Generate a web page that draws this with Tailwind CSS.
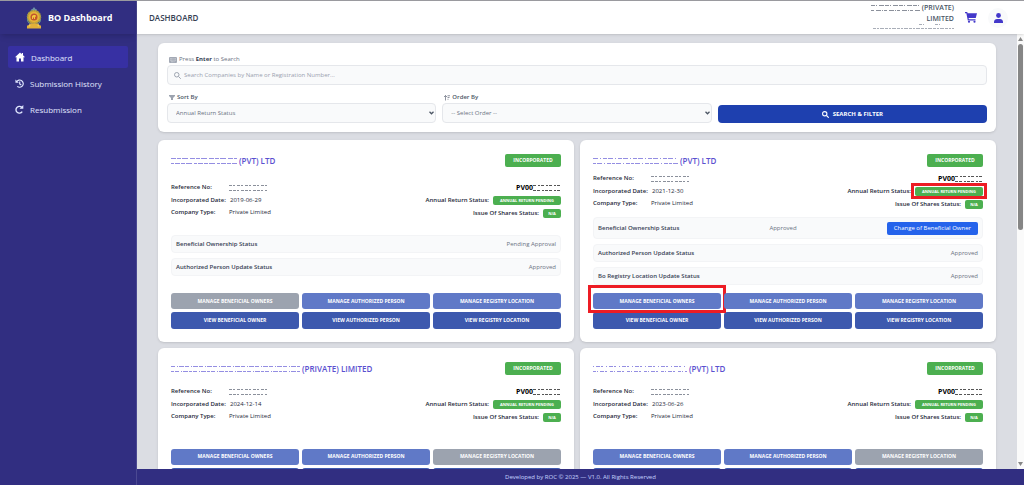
<!DOCTYPE html>
<html lang="en">
  <head>
    <meta charset="UTF-8" />
    <meta name="viewport" content="width=device-width, initial-scale=1.0" />
    <title>BO Dashboard</title>
    <script src="https://cdn.jsdelivr.net/npm/@tailwindcss/browser@4"></script>
    <style>
      body {
        font-family: "Open Sans", "Noto Sans", sans-serif;
      }
    </style>
  </head>
  <body class="h-screen flex overflow-hidden bg-[#dbdde3] text-[6px] leading-[9px] text-gray-800 border-t border-[#9a9a9f]">
    <!-- sidebar -->
    <aside class="w-[137px] shrink-0 bg-[#312e81] text-indigo-100 border-r border-[#4b4992]">
      <div class="h-[33px] flex items-center gap-[6px] pl-[26px] shadow-md">
        <svg class="w-4 h-[22px]" viewBox="0 0 32 44">
          <path d="M16 0l3 4 3 1-2 4h-8l-2-4 3-1z" fill="#6d93a8" />
          <circle cx="16" cy="20" r="14" fill="#d9a62e" />
          <circle cx="16" cy="20" r="13" fill="none" stroke="#8a9a5a" stroke-width="3" stroke-dasharray="2 2" />
          <circle cx="16" cy="20" r="10" fill="#e5b53b" />
          <circle cx="16" cy="20" r="7" fill="#c2552c" />
          <path d="M12 24v-6l3-2h4l1 3-2 1v4h-2v-3h-2v3z" fill="#f4c63d" />
          <path d="M3 25c0 7 6 11 13 11s13-4 13-11" fill="none" stroke="#6f9f8d" stroke-width="2" />
          <path d="M8 33h16l3 4h3v6H2v-6h3z" fill="#e2b03a" />
          <circle cx="7" cy="37" r="2" fill="#f0cf55" />
          <circle cx="25" cy="37" r="2" fill="#f0cf55" />
        </svg>
        <span class="text-[9px] leading-[14px] font-bold text-white">BO Dashboard</span>
      </div>
      <nav class="px-2 pt-3 flex flex-col gap-1 text-[8px]">
        <a href="#" class="h-[22px] rounded-[2px] bg-[#3730a3] flex items-center gap-[6px] px-[7px]">
          <svg class="w-[10px] h-[10px]" viewBox="0 0 20 20" fill="#fff"><path d="M10 1L0 10.500h3V19h5v-6h4v6h5v-8.500h3L16 6.700V2h-2.500v2.400z" /></svg>
          Dashboard
        </a>
        <a href="#" class="h-[22px] flex items-center gap-[6px] px-[7px]">
          <svg class="w-[9px] h-[9px]" viewBox="0 0 20 20" fill="none" stroke="currentColor" stroke-width="2.600"><path d="M3.500 6A8 8 0 1 1 5 16.300" /><path d="M1 1v7.500h7.500z" fill="currentColor" stroke="none" /><path d="M10.500 5.500V11l3.500 2.500" /></svg>
          Submission History
        </a>
        <a href="#" class="h-[22px] flex items-center gap-[6px] px-[7px]">
          <svg class="w-[9px] h-[9px]" viewBox="0 0 20 20" fill="none" stroke="currentColor" stroke-width="3"><path d="M16 6.500A7.500 7.500 0 1 0 16 14.500" /><path d="M18.500 0v8.500H10z" fill="currentColor" stroke="none" /></svg>
          Resubmission
        </a>
      </nav>
    </aside>

    <div class="flex-1 min-w-0 flex flex-col">
      <!-- top bar -->
      <header class="h-[33px] shrink-0 bg-white flex items-center pl-3 pr-4 shadow-sm z-10">
        <h1 class="text-[8px] font-semibold text-gray-700">DASHBOARD</h1>
        <div class="ml-auto text-right text-[7px] leading-[11px] font-semibold text-gray-600 pb-1">
          <div class="flex items-center justify-end gap-[2px]">
            <svg class="w-[49px] h-[6px]" stroke="#8b909b"><path d="M0 .5H49" stroke-dasharray="4 1 1 2 5 1" /><path d="M0 5.500H49" stroke-dasharray="3 2 5 1 1 1" /></svg>
            (PRIVATE)
          </div>
          <div>LIMITED</div>
          <svg class="w-[81px] h-[5px] ml-auto" stroke="#a9aeb8"><path d="M46 .5H76" stroke-dasharray="3 1 1 11" /><path d="M0 4.500H81" stroke-dasharray="3 1 2 1 4 1" /></svg>
        </div>
        <button aria-label="Cart" class="ml-[11px]">
          <svg class="w-3 h-[11px]" viewBox="0 0 24 22" fill="#4338ca"><path d="M0 0h4.500l.6 2.500H24L21.500 12H7.200l.5 2.500H21V17H5.600L2.700 2.500H0z" /><circle cx="8" cy="19.500" r="2.200" /><circle cx="19" cy="19.500" r="2.200" /></svg>
        </button>
        <button aria-label="Profile" class="ml-[11px] w-5 h-5 rounded-full bg-gray-50 flex items-center justify-center">
          <svg class="w-[9px] h-[10px]" viewBox="0 0 18 20" fill="#4338ca"><circle cx="9" cy="5" r="4.800" /><path d="M0 20v-2c0-4 3-6 6-6h6c3 0 6 2 6 6v2z" /></svg>
        </button>
      </header>

      <div class="flex-1 min-h-0 flex">
        <main class="flex-1 min-w-0 overflow-hidden px-[21px] pt-[9px]">
          <!-- search and filter -->
          <form class="bg-white rounded-[6px] shadow px-[9px] pt-3 pb-[9px]">
            <label for="search" class="flex items-center gap-[2px] pl-[2px] text-gray-500">
              <svg class="w-2 h-[6px]" viewBox="0 0 16 12"><rect width="16" height="12" rx="2" fill="#a3a9b5" /><path d="M2 3.500h12M2 6.500h12M4 9.500h8" stroke="#fff" stroke-dasharray="1.500 1" /></svg>
              <span>Press <b class="text-gray-700">Enter</b> to Search</span>
            </label>
            <div class="mt-[1px] h-5 rounded-[4px] border border-gray-200 bg-gray-50 flex items-center gap-[3px] px-[6px]">
              <svg class="w-[7px] h-[7px]" viewBox="0 0 14 14" fill="none" stroke="#9ca3af" stroke-width="2"><circle cx="5.500" cy="5.500" r="4.500" /><path d="M9 9l4.500 4.500" /></svg>
              <input id="search" type="text" placeholder="Search Companies by Name or Registration Number..." class="flex-1 outline-none placeholder:text-gray-400" />
            </div>
            <div class="mt-2 grid grid-cols-3 gap-[6px] items-end">
              <div>
                <label for="sort" class="flex items-center gap-[2px] pl-[2px] font-semibold text-gray-600">
                  <svg class="w-[6px] h-[5px]" viewBox="0 0 12 10" fill="#9ca3af"><path d="M0 0h12v2L8 6v4H4V6L0 2z" /></svg>
                  Sort By
                </label>
                <div class="relative mt-[1px]">
                  <select id="sort" class="appearance-none w-full h-5 rounded-[4px] border border-gray-200 bg-gray-50 px-2 text-gray-500">
                    <option>Annual Return Status</option>
                  </select>
                  <svg class="absolute right-[2px] top-2 w-[5px] h-1" viewBox="0 0 10 8" fill="none" stroke="#4b5563" stroke-width="2.500"><path d="M1 1.500l4 4 4-4" /></svg>
                </div>
              </div>
              <div>
                <label for="order" class="flex items-center gap-[2px] pl-[2px] font-semibold text-gray-600">
                  <svg class="w-[6px] h-[6px]" viewBox="0 0 12 12" fill="none" stroke="#6b7280" stroke-width="1.500"><path d="M3 11V1M0 4l3-3 3 3M7 1.500h5M7 5h4M7 8.500h2" /></svg>
                  Order By
                </label>
                <div class="relative mt-[1px]">
                  <select id="order" class="appearance-none w-full h-5 rounded-[4px] border border-gray-200 bg-gray-50 px-2 text-gray-500">
                    <option>-- Select Order --</option>
                  </select>
                  <svg class="absolute right-[2px] top-2 w-[5px] h-1" viewBox="0 0 10 8" fill="none" stroke="#4b5563" stroke-width="2.500"><path d="M1 1.500l4 4 4-4" /></svg>
                </div>
              </div>
              <button type="button" class="h-[18px] rounded-[4px] bg-[#1e40af] text-white font-bold flex items-center justify-center gap-1">
                <svg class="w-[7px] h-[7px]" viewBox="0 0 14 14" fill="none" stroke="#fff" stroke-width="2.200"><circle cx="5.500" cy="5.500" r="4.300" /><path d="M9 9l4.500 4.500" /></svg>
                SEARCH &amp; FILTER
              </button>
            </div>
          </form>

          <div id="companies" class="mt-2 grid grid-cols-2 gap-[6px]"></div>
        </main>

        <!-- scrollbar -->
        <div class="w-[7px] bg-[#fafafa] flex flex-col items-center py-[3px]">
          <svg class="w-[5px] h-1 shrink-0" viewBox="0 0 10 8" fill="#868686"><path d="M5 0l5 8H0z" /></svg>
          <div class="mt-[3px] w-[5px] h-[186px] rounded-full bg-[#868686]"></div>
          <svg class="w-[5px] h-1 shrink-0 mt-auto" viewBox="0 0 10 8" fill="#868686"><path d="M0 0h10L5 8z" /></svg>
        </div>
      </div>

      <footer class="h-4 shrink-0 bg-[#312e81] text-indigo-200 flex items-center justify-center">
        Developed by ROC © 2025 — V1.0. All Rights Reserved
      </footer>
    </div>

    <script>
      const companies = [
        {
          maskW: 66, suffix: "(PVT) LTD", dash: "5 1 4 1 6 2", date: "2019-06-29", off: 0,
          status: [["Beneficial Ownership Status", "Pending Approval"], ["Authorized Person Update Status", "Approved"]],
        },
        {
          maskW: 85, suffix: "(PVT) LTD", dash: "5 2 1 2 4 1", date: "2021-12-30", off: -1, marked: true,
          status: [["Beneficial Ownership Status", "Approved", "Change of Beneficial Owner"], ["Authorized Person Update Status", "Approved"], ["Bo Registry Location Update Status", "Approved"]],
        },
        { maskW: 129, suffix: "(PRIVATE) LIMITED", dash: "4 2 1 1 5 1", date: "2024-12-14", off: 2, status: [] },
        { maskW: 94, suffix: "(PVT) LTD", dash: "1 2 4 1 2 3", date: "2023-06-26", off: 2, status: [] },
      ];

      // hidden part of a name or number: only the upper and lower edges stay visible
      function mask(width, color, dash) {
        return `<svg width="${width}" height="6" fill="none" stroke="${color}" role="img" aria-label="hidden"><path d="M0 .5H${width}" stroke-dasharray="${dash}" /><path d="M0 5.500H${width}" stroke-dasharray="3 1 ${dash}" /></svg>`;
      }

      function statusRow([label, value, action]) {
        return `
          <div class="${action ? "h-[22px]" : "h-[18px]"} rounded-[4px] border border-gray-100 bg-gray-50 flex items-center justify-between px-1">
            <span class="font-semibold text-gray-700">${label}</span>
            <span class="text-gray-500">${value}</span>
            ${action ? `<button class="h-[13px] px-[7px] rounded-[2px] bg-[#2563eb] text-white">${action}</button>` : ""}
          </div>`;
      }

      const redBox = `<span class="absolute -inset-x-[5px] -top-2 -bottom-1 border-3 border-[#ed1c24]"></span>`;
      const smallRedBox = `<span class="absolute -inset-x-1 -top-1 -bottom-[3px] border-3 border-[#ed1c24]"></span>`;

      function card(c) {
        const manage = ["MANAGE BENEFICIAL OWNERS", "MANAGE AUTHORIZED PERSON", "MANAGE REGISTRY LOCATION"];
        const view = ["VIEW BENEFICIAL OWNER", "VIEW AUTHORIZED PERSON", "VIEW REGISTRY LOCATION"];
        return `
          <section class="bg-white rounded-[6px] shadow px-[13px] pt-[14px] pb-[13px] min-h-[150px] flex flex-col justify-between">
            <div class="flex items-center justify-between">
              <h2 class="flex items-center gap-[2px] text-[8px] font-semibold text-[#5a50d0]">${mask(c.maskW, "#948ee2", c.dash)}${c.suffix}</h2>
              <span class="h-[13px] w-14 rounded-[2px] bg-[#4caf50] text-white text-[5px] font-bold flex items-center justify-center">INCORPORATED</span>
            </div>
            <div class="mt-[7px] flex justify-between">
              <dl class="grid grid-cols-[58px_auto] content-between h-[34px]">
                <dt class="font-semibold">Reference No:</dt><dd class="flex items-center">${mask(38, "#8b909b", "3 1 2 2")}</dd>
                <dt class="font-semibold">Incorporated Date:</dt><dd class="pl-[1px]">${c.date}</dd>
                <dt class="font-semibold">Company Type:</dt><dd>Private Limited</dd>
              </dl>
              <div class="flex flex-col items-end justify-between h-[35px] font-semibold">
                <div class="flex items-center text-[7px] font-bold text-black">PV00${mask(28, "#555", "3 2 2 1")}</div>
                <div class="flex items-center gap-1">Annual Return Status:
                  <span class="relative h-[9px] w-[68px] rounded-[2px] bg-[#4caf50] text-white text-[4px] font-bold flex items-center justify-center">ANNUAL RETURN PENDING${c.marked ? smallRedBox : ""}</span>
                </div>
                <div class="flex items-center gap-1">Issue Of Shares Status:
                  <span class="h-[9px] w-[18px] rounded-[2px] bg-[#4caf50] text-white text-[4px] font-bold flex items-center justify-center">N/A</span>
                </div>
              </div>
            </div>
            <div class="mt-2 flex flex-col gap-[5px]">${c.status.map(statusRow).join("")}</div>
            <div class="mt-2 grid grid-cols-3 gap-[3px] text-[5px] font-bold text-white">
              ${manage.map((text, i) => `<button class="relative h-4 rounded-[3px] ${i === c.off ? "bg-[#9ca3af]" : "bg-[#6079c7]"}">${text}${c.marked && i === 0 ? redBox : ""}</button>`).join("")}
              ${view.map((text) => `<button class="h-[17px] rounded-[3px] bg-[#3d59ae]">${text}</button>`).join("")}
            </div>
          </section>`;
      }

      document.getElementById("companies").innerHTML = companies.map(card).join("");
    </script>
  </body>
</html>
